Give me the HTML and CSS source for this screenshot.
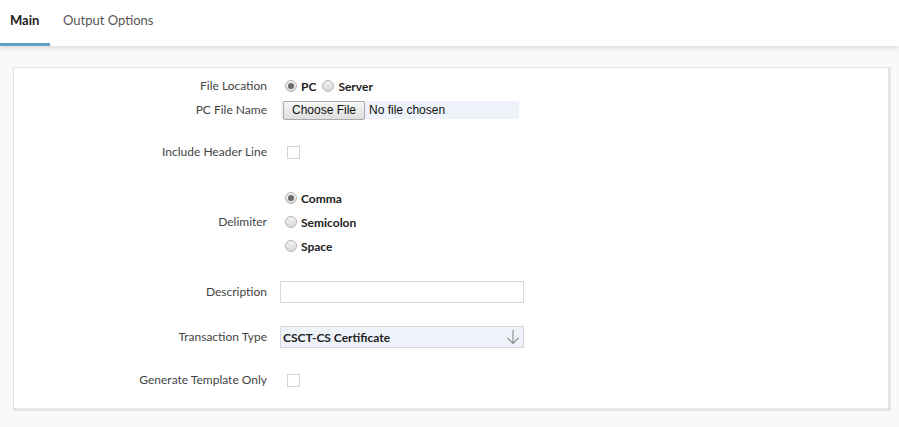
FILE: index.html
```html
<!DOCTYPE html>
<html>
<head>
<meta charset="utf-8">
<link rel="stylesheet" href="styles.css">
</head>
<body>
<div class="tabs">
  <div class="tab active">Main</div>
  <div class="tab">Output Options</div>
</div>
<div class="panel">
  <div class="row r1">
    <div class="label">File Location</div>
    <div class="ctrl">
      <span class="radio checked"></span><span class="opt">PC</span>
      <span class="radio"></span><span class="opt">Server</span>
    </div>
  </div>
  <div class="row r2">
    <div class="label">PC File Name</div>
    <div class="ctrl">
      <div class="file"><span class="filebtn">Choose File</span><span class="filetext">No file chosen</span></div>
    </div>
  </div>
  <div class="row r3">
    <div class="label">Include Header Line</div>
    <div class="ctrl"><span class="check"></span></div>
  </div>
  <div class="row r4">
    <div class="label">Delimiter</div>
    <div class="ctrl col">
      <div class="line"><span class="radio checked"></span><span class="opt">Comma</span></div>
      <div class="line"><span class="radio"></span><span class="opt">Semicolon</span></div>
      <div class="line"><span class="radio"></span><span class="opt">Space</span></div>
    </div>
  </div>
  <div class="row r5">
    <div class="label">Description</div>
    <div class="ctrl"><div class="input"></div></div>
  </div>
  <div class="row r6">
    <div class="label">Transaction Type</div>
    <div class="ctrl">
      <div class="select"><span class="seltext">CSCT-CS Certificate</span>
        <svg class="arrow" width="14" height="16" viewBox="0 0 14 16"><path d="M7 1 V14.5 M1.5 9 L7 14.5 L12.5 9" fill="none" stroke="#8a8a8a" stroke-width="1.1"/></svg>
      </div>
    </div>
  </div>
  <div class="row r7">
    <div class="label">Generate Template Only</div>
    <div class="ctrl"><span class="check"></span></div>
  </div>
</div>
</body>
</html>
```
FILE: styles.css
```css
* { box-sizing: border-box; }
html, body { margin: 0; padding: 0; }
body {
  background: #f9f9f9;
  font-family: Lato, "Noto Sans", sans-serif;
  color: #333;
  width: 899px;
  height: 427px;
  overflow: hidden;
}
.tabs {
  height: 46px;
  background: #fff;
  display: flex;
  box-shadow: 0 2px 6px rgba(0,0,0,0.13);
  position: relative;
}
.tab {
  font-size: 13px;
  color: #555;
  height: 46px;
  line-height: 40px;
  padding: 0 10px;
  margin-right: 3px;
}
.tab.active {
  font-weight: bold;
  color: #222;
  border-bottom: 3px solid #5f9fc8;
  padding: 0 10px 0 10px;
  width: 50px;
}
.panel {
  margin: 21px 0 0 13px;
  width: 878px;
  height: 344px;
  background: #fff;
  border-left: 1px solid #e3e3e3;
  border-top: 1px solid #e3e3e3;
  border-right: 3px solid #e6e6e6;
  border-bottom: 3px solid #e6e6e6;
  padding-top: 9px;
}
.row {
  display: flex;
  align-items: center;
  font-size: 12px;
}
.label {
  width: 253px;
  text-align: right;
  color: #444;
  flex: none;
  padding-bottom: 2px;
}
.ctrl {
  margin-left: 13px;
  display: flex;
  align-items: center;
}
.ctrl.col { flex-direction: column; align-items: flex-start; }
.r1 { height: 18px; }
.r2 { height: 18px; margin-top: 6px; }
.r3 { height: 18px; margin-top: 24px; }
.r4 { height: 72px; margin-top: 25px; }
.r5 { height: 22px; margin-top: 23px; }
.r6 { height: 22px; margin-top: 23px; }
.r7 { height: 18px; margin-top: 23px; }
.line { height: 24px; display: flex; align-items: center; }
.radio {
  width: 12px;
  height: 12px;
  border-radius: 50%;
  border: 1px solid #b4b4b4;
  background: linear-gradient(#f4f4f4, #d8d8d8);
  margin-left: 5px;
  margin-right: 4px;
  position: relative;
  flex: none;
}
.radio.checked::after {
  content: "";
  position: absolute;
  left: 2px; top: 2px;
  width: 6px; height: 6px;
  border-radius: 50%;
  background: #6a6a6a;
}
.opt { font-weight: bold; color: #222; margin-right: 1px; }
.file {
  width: 238px;
  height: 18px;
  background: #eef3fa;
  display: flex;
  align-items: center;
  margin-left: 1px;
}
.filebtn {
  font-family: "Liberation Sans", Arial, sans-serif;
  font-size: 12px;
  color: #111;
  height: 19px;
  line-height: 17px;
  padding: 0 8px;
  margin-left: 2px;
  border: 1px solid #a9a9a9;
  border-radius: 2px;
  background: linear-gradient(#f6f6f6, #dedede);
}
.filetext {
  font-family: "Liberation Sans", Arial, sans-serif;
  font-size: 12px;
  color: #111;
  margin-left: 4px;
}
.check {
  width: 13px;
  height: 13px;
  border: 1px solid #d4d4d4;
  background: #fff;
  margin-left: 7px;
}
.input {
  width: 244px;
  height: 22px;
  border: 1px solid #d9d9d9;
  background: #fff;
}
.select {
  width: 244px;
  height: 22px;
  border: 1px solid #d6d6d6;
  background: #eef3fa;
  display: flex;
  align-items: center;
  justify-content: space-between;
  padding: 0 3px 0 2px;
}
.seltext { font-weight: bold; color: #222; font-size: 12px; }
.arrow { display: block; }
```
